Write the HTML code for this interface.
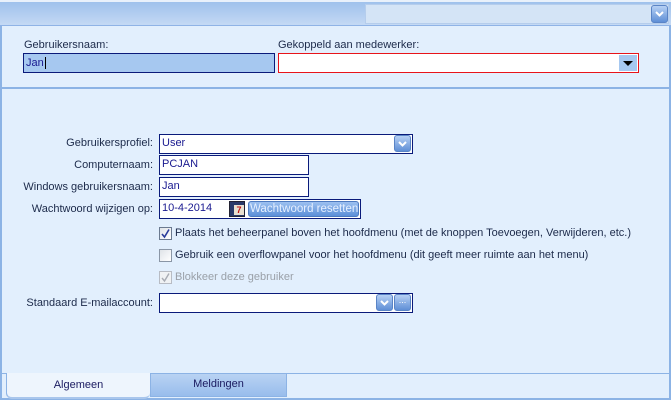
<!DOCTYPE html>
<html><head><meta charset="utf-8"><style>
*{margin:0;padding:0;box-sizing:border-box}
body{width:671px;height:400px;overflow:hidden;background:#e2effd;font-family:"Liberation Sans",sans-serif;font-size:11px;color:#1a1a40;position:relative}
.a{position:absolute}
.lbl{position:absolute;right:518px;text-align:right;white-space:nowrap;color:#1c2a4a}
.in{position:absolute;background:#fff;border:1px solid #0a1a7a;color:#1a1a90;padding:2px 0 0 2px;height:20px}
.btn{position:absolute;width:17px;height:17px;border-radius:3px;background:linear-gradient(#b6d0f4,#5f8fd6);border:1px solid #5a84c6}
.cb{position:absolute;left:159px;width:13px;height:13px;border:1px solid #8a96a6;background:linear-gradient(135deg,#dfe3e8,#fff)}
.ct{position:absolute;left:175px;white-space:nowrap;color:#1c2a4a}
</style></head><body>
<div class="a" style="left:0;top:0;width:671px;height:26px;background:linear-gradient(#9fc1ec,#c4d9f4);border-top:2px solid #e9f1fb;border-bottom:1px solid #8fb3e6"></div>
<div class="a" style="left:365px;top:4px;width:304px;height:20px;background:#d4e4f6;border:1px solid #b5cdec"></div>
<div class="btn" style="left:651px;top:5px;width:17px;height:18px"><svg width="15" height="16" viewBox="0 0 15 16"><path d="M4 6l3.5 3.5L11 6" stroke="#fff" stroke-width="2" fill="none"/></svg></div>
<div class="a" style="left:0;top:26px;width:2px;height:374px;background:#8cb3e5"></div>
<div class="a" style="left:669px;top:26px;width:2px;height:374px;background:#8cb3e5"></div>
<div class="a" style="left:0;top:87px;width:671px;height:2px;background:#8cb3e5"></div>
<div class="a" style="left:24px;top:39px;color:#1c2a4a">Gebruikersnaam:</div>
<div class="a" style="left:278px;top:39px;color:#1c2a4a">Gekoppeld aan medewerker:</div>
<div class="a" style="left:23px;top:53px;width:252px;height:20px;background:#a6c8f0;border:1px solid #0a1a7a;color:#1a1a90;padding:3px 0 0 2px">Jan<span style="border-left:1px solid #000;margin-left:1px"></span></div>
<div class="a" style="left:278px;top:53px;width:361px;height:20px;background:#fff;border:1px solid #e8141a"></div>
<div class="a" style="left:619px;top:55px;width:18px;height:16px;background:#a6c8f0"><svg width="18" height="16"><path d="M4 6h10l-5 5z" fill="#000"/></svg></div>

<div class="lbl" style="top:137px">Gebruikersprofiel:</div>
<div class="in" style="left:159px;top:134px;width:254px">User</div>
<div class="btn" style="left:394px;top:135px"><svg width="15" height="15"><path d="M4 6l3.5 3.5L11 6" stroke="#fff" stroke-width="2" fill="none"/></svg></div>
<div class="lbl" style="top:159px">Computernaam:</div>
<div class="in" style="left:159px;top:155px;width:150px">PCJAN</div>
<div class="lbl" style="top:181px">Windows gebruikersnaam:</div>
<div class="in" style="left:159px;top:177px;width:150px">Jan</div>
<div class="lbl" style="top:203px">Wachtwoord wijzigen op:</div>
<div class="in" style="left:159px;top:199px;width:202px">10-4-2014</div>
<div class="a" style="left:229px;top:201px;width:16px;height:16px;background:#2a3a6a;border:1px solid #223"><div style="margin:3px 0 0 4px;width:10px;height:10px;background:#e8e0d0;color:#c01010;font-size:9px;font-weight:bold;line-height:10px;text-align:center">7</div></div>
<div class="a" style="left:248px;top:201px;width:111px;height:16px;border-radius:3px;background:linear-gradient(#9cc0f0,#5c8fd8);border:1px solid #4d7ac0;color:#e6f0ff;font-size:11.5px;line-height:14px;text-align:center;white-space:nowrap;padding:0 1px">Wachtwoord resetten</div>

<div class="cb" style="top:227px;border-color:#6b7a90"><svg width="11" height="11"><path d="M2 6l2.5 3L9 1.5" stroke="#2a3c9a" stroke-width="1.6" fill="none"/></svg></div>
<div class="ct" style="top:227px">Plaats het beheerpanel boven het hoofdmenu (met de knoppen Toevoegen, Verwijderen, etc.)</div>
<div class="cb" style="top:249px"></div>
<div class="ct" style="top:249px">Gebruik een overflowpanel voor het hoofdmenu (dit geeft meer ruimte aan het menu)</div>
<div class="cb" style="top:271px;border-color:#b8bcc4;background:#f0f2f4"><svg width="11" height="11"><path d="M2 6l2.5 3L9 1.5" stroke="#a8acb4" stroke-width="1.4" fill="none"/></svg></div>
<div class="ct" style="top:271px;color:#9aa0a8">Blokkeer deze gebruiker</div>

<div class="lbl" style="top:297px">Standaard E-mailaccount:</div>
<div class="in" style="left:159px;top:293px;width:254px"></div>
<div class="btn" style="left:376px;top:294px"><svg width="15" height="15"><path d="M4 6l3.5 3.5L11 6" stroke="#fff" stroke-width="2" fill="none"/></svg></div>
<div class="btn" style="left:394px;top:294px;color:#fff;font-size:9px;line-height:10px;text-align:center">...</div>

<div class="a" style="left:0;top:373px;width:671px;height:1px;background:#8cb3e5"></div>
<div class="a" style="left:0;top:398px;width:671px;height:2px;background:#8cb3e5"></div>
<div class="a" style="left:6px;top:373px;width:144px;height:26px;background:#eef5fd;border-left:1px solid #8cb3e5;border-bottom:2px solid #a9c6ec;border-radius:0 0 6px 6px;text-align:center;padding-top:6px;color:#1a1a60">Algemeen</div>
<div class="a" style="left:150px;top:373px;width:137px;height:24px;background:linear-gradient(#b9d3f3,#98bdec);border:1px solid #8cb3e5;text-align:center;padding-top:4px;color:#1a1a60">Meldingen</div>
</body></html>
